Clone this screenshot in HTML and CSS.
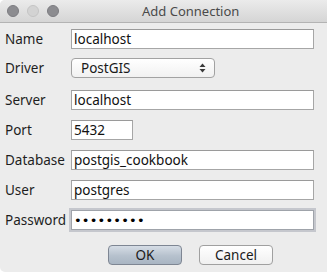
FILE: index.html
```html
<!DOCTYPE html>
<html>
<head>
<meta charset="utf-8">
<link rel="stylesheet" href="styles.css">
</head>
<body>
<div class="window">
  <div class="titlebar">
    <div class="lights">
      <span class="light dark"></span>
      <span class="light pale"></span>
      <span class="light dark"></span>
    </div>
    <div class="title">Add Connection</div>
  </div>
  <div class="form">
    <div class="label">Name</div>
    <div class="field">localhost</div>

    <div class="label">Driver</div>
    <div class="select">
      <span>PostGIS</span>
      <svg class="arrows" width="7" height="10" viewBox="0 0 7 10">
        <path d="M3.5 0.5 L6.5 4 L0.5 4 Z" fill="#3a3a3a"/>
        <path d="M0.5 6 L6.5 6 L3.5 9.5 Z" fill="#3a3a3a"/>
      </svg>
    </div>

    <div class="label">Server</div>
    <div class="field">localhost</div>

    <div class="label">Port</div>
    <div class="field short">5432</div>

    <div class="label">Database</div>
    <div class="field">postgis_cookbook</div>

    <div class="label">User</div>
    <div class="field">postgres</div>

    <div class="label">Password</div>
    <div class="field focused"><span class="dots">•••••••••</span></div>
  </div>
  <div class="buttons">
    <div class="button default">OK</div>
    <div class="button">Cancel</div>
  </div>
</div>
</body>
</html>
```

FILE: styles.css
```css
html, body {
  margin: 0;
  padding: 0;
  background: #ffffff;
}

body {
  width: 327px;
  height: 276px;
  font-family: "Noto Sans", "DejaVu Sans", sans-serif;
  font-size: 13.5px;
  color: #1a1a1a;
}

.window {
  width: 327px;
  height: 272px;
  background: #ececec;
  border-radius: 5px 0 0 5px;
  overflow: hidden;
}

.titlebar {
  position: relative;
  height: 22px;
  background: linear-gradient(#ebebeb, #d5d5d5);
  border-bottom: 1px solid #b3b3b3;
  display: flex;
  align-items: center;
  padding-left: 142px;
}

.lights {
  position: absolute;
  left: 7px;
  top: 5px;
  display: flex;
  gap: 8px;
}

.light {
  width: 12px;
  height: 12px;
  border-radius: 50%;
  box-sizing: border-box;
}

.light.dark {
  background: #8c8c90;
  border: 1px solid #7c7c80;
}

.light.pale {
  background: #d3d3d3;
  border: 1px solid #c4c4c4;
}

.title {
  font-family: "Noto Sans", sans-serif;
  font-size: 13px;
  color: #4a4a4a;
  line-height: 22px;
}

.form {
  display: grid;
  grid-template-columns: 66px 243px;
  grid-template-rows: 29px 32px 30px 30px 30px 30px 30px;
  padding: 6px 0 0 5px;
  align-items: start;
}

.label {
  height: 20px;
  line-height: 20px;
  color: #1e1e1e;
}

.field {
  box-sizing: border-box;
  height: 20px;
  background: #ffffff;
  border: 1px solid #a6a6a6;
  border-top-color: #9a9a9a;
  padding-left: 2px;
  line-height: 18px;
  color: #111;
}

.field.short {
  width: 62px;
}

.field.focused {
  box-shadow: 0 0 0 2px #c5c7cd;
  border-color: #9fa3aa;
}

.dots {
  font-family: "DejaVu Sans", sans-serif;
  font-size: 13px;
  letter-spacing: 0.2px;
  color: #000;
}

.select {
  box-sizing: border-box;
  width: 144px;
  height: 20px;
  border: 1px solid #a2a2a2;
  border-radius: 4px;
  background: linear-gradient(#ffffff, #f1f1f1);
  display: flex;
  align-items: center;
  justify-content: space-between;
  padding: 0 8px 0 9px;
  line-height: 18px;
}

.arrows {
  display: block;
}

.buttons {
  display: flex;
  gap: 17px;
  padding-left: 108px;
  margin-top: 5px;
}

.button {
  box-sizing: border-box;
  width: 74px;
  height: 20px;
  border: 1px solid #a0a0a0;
  border-radius: 4px;
  background: linear-gradient(#ffffff, #f0f0f0);
  text-align: center;
  line-height: 18px;
  color: #1a1a1a;
}

.button.default {
  border-color: #7e8693;
  background: linear-gradient(#d6dde6, #b6c1cd 55%, #a9b5c3);
}
```
